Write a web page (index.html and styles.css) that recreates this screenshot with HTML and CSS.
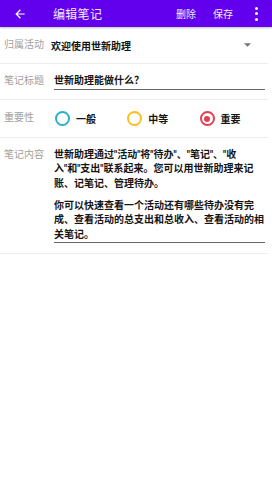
FILE: index.html
```html
<!DOCTYPE html>
<html>
<head>
<meta charset="utf-8">
<link rel="stylesheet" href="styles.css">
</head>
<body>
<div class="appbar">
  <svg class="back" width="14" height="14" viewBox="0 0 24 24"><path d="M20 11H7.83l5.59-5.59L12 4l-8 8 8 8 1.41-1.41L7.83 13H20v-2z" fill="#fff"/></svg>
  <div class="title">编辑笔记</div>
  <div class="action">删除</div>
  <div class="action">保存</div>
  <div class="kebab"><i></i><i></i><i></i></div>
</div>
<div class="form">
  <div class="row r1">
    <div class="label">归属活动</div>
    <div class="value sel grow">欢迎使用世新助理</div>
    <svg class="caret" width="7" height="4" viewBox="0 0 10 5"><path d="M0 0h10L5 5z" fill="#757575"/></svg>
  </div>
  <div class="row r2">
    <div class="label">笔记标题</div>
    <div class="value input grow">世新助理能做什么？</div>
  </div>
  <div class="row r3">
    <div class="label">重要性</div>
    <div class="radios">
      <div class="radio"><span class="dot c1"></span><span class="value">一般</span></div>
      <div class="radio"><span class="dot c2"></span><span class="value">中等</span></div>
      <div class="radio"><span class="dot c3 on"></span><span class="value">重要</span></div>
    </div>
  </div>
  <div class="row r4">
    <div class="label">笔记内容</div>
    <div class="value area grow"><p>世新助理通过"活动"将"待办"、"笔记"、"收<br>入"和"支出"联系起来。您可以用世新助理来记<br>账、记笔记、管理待办。</p><p>你可以快速查看一个活动还有哪些待办没有完<br>成、查看活动的总支出和总收入、查看活动的相<br>关笔记。</p></div>
  </div>
</div>
</body>
</html>
```
FILE: styles.css
```css
* { box-sizing: border-box; }
html, body { margin: 0; padding: 0; background: #fff; }
body { font-family: Roboto, "Noto Sans CJK SC", sans-serif; width: 272px; }
.appbar {
  height: 27px; background: #6200ee; display: flex; align-items: center;
  color: #fff; box-shadow: 0 1px 2px rgba(0,0,0,0.25);
}
.back { margin-left: 13px; }
.title { margin-left: 26px; font-size: 12px; flex: 1; letter-spacing: 0.3px; color: #f2ecff; }
.action { font-size: 10px; margin-right: 17px; color: #f2ecff; }
.kebab { display: flex; flex-direction: column; gap: 2.5px; margin-right: 14px; margin-left: 5px; }
.kebab i { width: 3px; height: 3px; border-radius: 50%; background: #fff; display: block; }
.form { padding-right: 4px; }
.row { display: flex; align-items: center; border-bottom: 1px solid #ededed; padding-left: 4px; }
.r1 { height: 37px; }
.r2 { height: 36px; }
.r3 { height: 38px; }
.r4 { align-items: flex-start; padding-top: 9.5px; padding-bottom: 9.5px; }
.label { width: 50px; font-size: 10px; color: #a0a0a0; flex: none; line-height: 14.5px; }
.value { font-size: 10px; color: #151515; font-weight: 700; }
.sel { margin-left: -3px; }
.grow { flex: 1; }
.caret { margin-right: 17px; }
.input { border-bottom: 1px solid #666; padding: 0 0 1px 0; margin-right: 3px; line-height: 14px; }
.area { border-bottom: 1px solid #666; padding: 0; margin-right: 3px; line-height: 14.5px; white-space: nowrap; }
.area p { margin: 0; }
.area p + p { margin-top: 7.5px; }
.radios { display: flex; flex: 1; padding-left: 1px; }
.radio { display: flex; align-items: center; width: 72.3px; }
.dot { width: 15px; height: 15px; border-radius: 50%; border: 2px solid; margin-right: 6px; position: relative; flex: none; }
.c1 { border-color: #2ab0c8; }
.c2 { border-color: #fbbf20; }
.c3 { border-color: #e53e52; }
.on::after { content: ""; position: absolute; left: 2.5px; top: 2.5px; width: 6px; height: 6px; border-radius: 50%; background: #e53e52; }
```
